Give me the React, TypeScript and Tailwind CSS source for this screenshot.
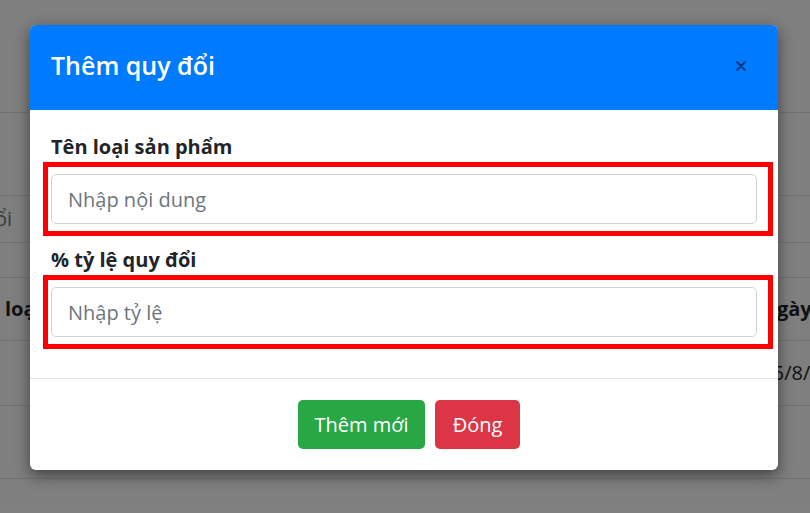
import React from 'react'

function CloseIcon() {
  return (
    <svg width="10" height="10" viewBox="0 0 10 10" fill="none">
      <path d="M1 1 L9 9 M9 1 L1 9" stroke="#003d80" strokeWidth="2" strokeLinecap="round" />
    </svg>
  )
}

function Field({ label, placeholder }: { label: string; placeholder: string }) {
  return (
    <div className="flex flex-col">
      <label className="text-[20px] leading-[30px] font-bold text-[#212529]">{label}</label>
      {/* red highlight around the input */}
      <div className="-ml-[8px] -mr-[16px] border-[5px] border-[#ff0000] pl-[3px] pr-[11px] pt-[7px] pb-[7px]">
        <input
          className="w-full h-[50px] rounded-[5px] border border-[#ced4da] bg-white px-[16px] text-[20px] text-[#495057] placeholder:text-[#6c757d] outline-none"
          placeholder={placeholder}
        />
      </div>
    </div>
  )
}

export default function App() {
  return (
    <div
      className="relative h-[513px] w-[810px] overflow-hidden bg-white"
      style={{ fontFamily: '"Open Sans", "Noto Sans", sans-serif' }}
    >
      {/* Page behind the modal */}
      <div className="flex flex-col">
        <div className="h-[113px] border-b border-[#dee2e6]" />
        <div className="h-[82px]" />
        <div className="h-[48px] border-y border-[#dee2e6] flex items-center">
          <div className="w-[12px] flex justify-end whitespace-nowrap text-[20px] text-[#6c757d]">
            Tỷ lệ quy đổi
          </div>
        </div>
        <div className="h-[34px]" />
        <div className="flex flex-col border-t border-[#dee2e6] text-[20px] text-[#212529]">
          <div className="h-[63px] border-b border-[#dee2e6] flex items-center justify-between font-bold whitespace-nowrap">
            <span className="pl-[5px]">loại sản phẩm</span>
            <span className="-mr-[40px]">Ngày tạo</span>
          </div>
          <div className="h-[65px] border-b border-[#dee2e6] flex items-center justify-end whitespace-nowrap">
            <span className="-mr-[46px]">15/8/2023</span>
          </div>
          <div className="h-[73px] border-b border-[#dee2e6]" />
        </div>
      </div>

      {/* Backdrop */}
      <div className="absolute inset-0 bg-black/50" />

      {/* Modal */}
      <div className="absolute left-[30px] top-[25px] w-[748px] rounded-[6px] bg-white shadow-[0_5px_15px_rgba(0,0,0,0.5)] flex flex-col overflow-hidden">
        <div className="h-[85px] bg-[#007bff] pl-[21px] pr-[32px] flex items-center justify-between">
          <h5 className="text-[25px] font-semibold text-white leading-none -mt-[4px]">Thêm quy đổi</h5>
          <button className="flex items-center justify-center -mt-[4px]">
            <CloseIcon />
          </button>
        </div>

        <div className="px-[21px] pt-[22px] pb-[29px] flex flex-col gap-[9px]">
          <Field label="Tên loại sản phẩm" placeholder="Nhập nội dung" />
          <Field label="% tỷ lệ quy đổi" placeholder="Nhập tỷ lệ" />
        </div>

        <div className="border-t border-[#dee2e6] pt-[21px] pb-[21px] pl-[10px] flex justify-center gap-[10px]">
          <button className="h-[49px] w-[127px] rounded-[5px] bg-[#28a745] text-[20px] text-white">Thêm mới</button>
          <button className="h-[49px] w-[85px] rounded-[5px] bg-[#dc3545] text-[20px] text-white">Đóng</button>
        </div>
      </div>
    </div>
  )
}
